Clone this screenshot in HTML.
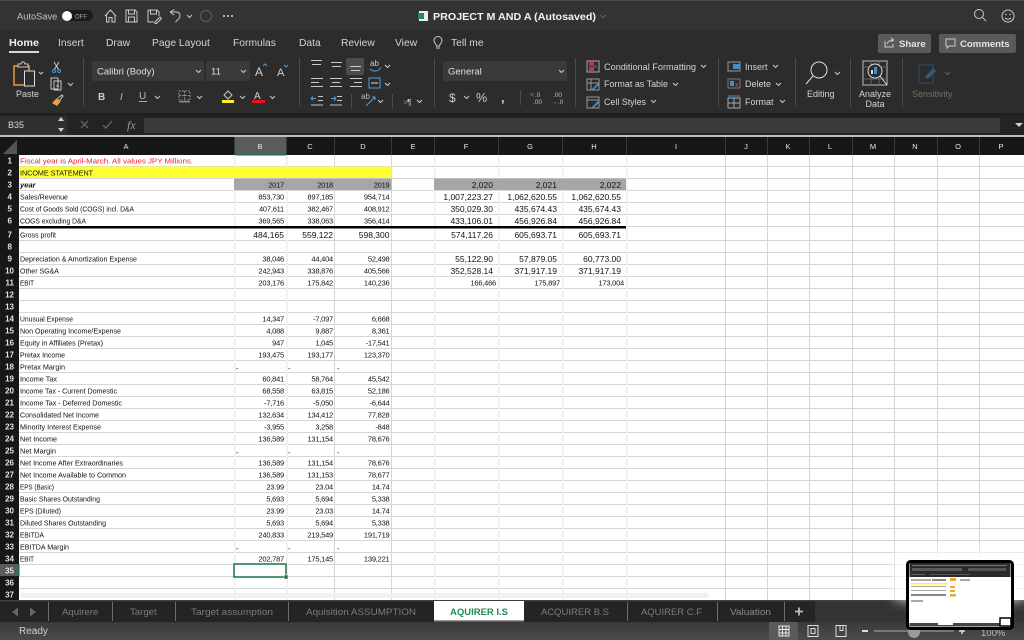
<!DOCTYPE html>
<html><head><meta charset="utf-8"><title>PROJECT M AND A</title>
<style>
html,body{margin:0;padding:0;background:#2d2d2d;width:1024px;height:640px;overflow:hidden}
svg{display:block;font-family:"Liberation Sans",sans-serif;filter:blur(.3px)}
.i{fill:none;stroke:#c9c9c9;stroke-width:1}
.r{font-size:10.3px;fill:#d4d4d4}
.s{font-size:9px;fill:#d4d4d4}
.t{font-size:9.6px;fill:#7c7c7c}
.l text{font-size:7.6px;fill:#111}
.n text{font-size:7.5px;fill:#111;text-anchor:end;letter-spacing:-.22px}
.m text{font-size:8.5px;fill:#111;text-anchor:end}
.h text{font-size:7.5px;fill:#e8e8e8;text-anchor:middle}
.rh text{font-size:8px;font-weight:bold;fill:#e4e4e4;text-anchor:end}
.c{fill:none;stroke:#c9c9c9;stroke-width:1}
</style></head><body>
<svg xmlns="http://www.w3.org/2000/svg" width="1024" height="640" viewBox="0 0 1024 640">
<defs><filter id="b" x="-30%" y="-30%" width="160%" height="160%"><feGaussianBlur stdDeviation="6"/></filter>
<linearGradient id="sb" x1="0" y1="0" x2="0" y2="1"><stop offset="0" stop-color="#3a3a3a"/><stop offset="1" stop-color="#4b4b4b"/></linearGradient></defs>
<!-- chrome -->
<rect width="1024" height="30" fill="#333"/>
<rect width="1024" height="1" fill="#4b4b4b"/>
<rect y="30" width="1024" height="83" fill="#2c2c2c"/>
<rect y="113" width="1024" height="22" fill="#232323"/>
<!-- title bar -->
<text x="17" y="19.500" font-size="9.300" fill="#c4c4c4">AutoSave</text>
<rect x="62" y="10" width="31" height="11" rx="5.500" fill="#1b1b1b"/><circle cx="67" cy="16" r="5" fill="#fff"/>
<text x="75" y="18.500" font-size="6" fill="#aaa">OFF</text>
<path class="i" d="M105 16l5.500-6 5.500 6M106.500 15v7h2.500v-4.500h3V22h3v-7"/>
<path class="i" d="M126 10h9l2 2v10h-11zM128.500 10v4h6v-4M128.500 22v-5h6v5"/>
<path class="i" d="M148 10h9l2 2v4M148 10v12h6M150.500 10v4h6v-4M155 22l5-5 1.500 1.500-5 5h-1.500z"/>
<path class="i" d="M170 12l4.500-2.500M170 12l4 3M170 12h6c3 0 4 2 4 4 0 2-2 3.500-4.500 6"/>
<path class="c" d="M187 15l2.500 2.500L192 15"/>
<circle cx="206" cy="16" r="5.500" fill="none" stroke="#5e5e5e"/>
<circle cx="224" cy="16" r="1" fill="#ddd"/><circle cx="228" cy="16" r="1" fill="#ddd"/><circle cx="232" cy="16" r="1" fill="#ddd"/>
<rect x="419" y="11" width="9" height="10" fill="#eee"/><rect x="418" y="13" width="6" height="6" fill="#2a8a57"/>
<text x="433" y="20" font-size="10.400" font-weight="bold" fill="#f2f2f2" textLength="163" lengthAdjust="spacingAndGlyphs">PROJECT M AND A (Autosaved)</text>
<path d="M600 15l3 2.500 3-2.500" fill="none" stroke="#666"/>
<circle cx="979" cy="14" r="4.500" class="i"/><path class="i" d="M982.500 17.500L986 21"/>
<circle cx="1008" cy="16" r="6" class="i"/><circle cx="1006" cy="14.500" r=".8" fill="#ccc"/><circle cx="1010" cy="14.500" r=".8" fill="#ccc"/><path class="i" d="M1005 18c1.500 1.500 4.500 1.500 6 0"/>
<!-- tabs -->
<text x="9" y="46" font-size="10.300" font-weight="bold" fill="#f0f0f0" textLength="30" lengthAdjust="spacingAndGlyphs">Home</text>
<rect x="9" y="51" width="30" height="2" fill="#d8d8d8"/>
<text class="r" x="58" y="46">Insert</text><text class="r" x="106" y="46">Draw</text><text class="r" x="152" y="46">Page Layout</text><text class="r" x="233" y="46">Formulas</text><text class="r" x="299" y="46">Data</text><text class="r" x="341" y="46">Review</text><text class="r" x="395" y="46">View</text>
<path class="i" d="M436 48h4M436.500 46c0-2-2.500-3-2.500-5.500a4 4 0 0 1 8 0c0 2.500-2.500 3.500-2.500 5.500z"/>
<text class="r" x="451" y="46">Tell me</text>
<rect x="878" y="34" width="53" height="19" rx="2" fill="#5a5a5a"/><text x="899" y="47" font-size="9.600" font-weight="bold" fill="#e4e4e4">Share</text>
<path class="i" d="M885 41v6h8v-3M887 44c1-3 3-4 6-4M891 38l2.500 2-2.500 2"/>
<rect x="939" y="34" width="77" height="19" rx="2" fill="#5a5a5a"/><text x="960" y="47" font-size="9.600" font-weight="bold" fill="#e4e4e4">Comments</text>
<path class="i" d="M946 39h9v7h-6l-2 2v-2h-1z"/>
<!-- separators -->
<g fill="#4a4a4a"><rect x="83" y="58" width="1" height="49"/><rect x="299" y="58" width="1" height="49"/><rect x="434" y="58" width="1" height="49"/><rect x="575" y="58" width="1" height="49"/><rect x="718" y="58" width="1" height="49"/><rect x="795" y="58" width="1" height="49"/><rect x="850" y="58" width="1" height="49"/><rect x="902" y="58" width="1" height="49"/></g>
<!-- paste group -->
<path d="M14 66h15v19H14z" fill="none" stroke="#e39a3b" stroke-width="1.500"/>
<path class="i" d="M18 64h3l1-2h2l1 2h3v3H18z" style="fill:#2c2c2c"/>
<rect x="24.500" y="71" width="10" height="15" fill="#2c2c2c" stroke="#ddd"/>
<path class="c" d="M39 72l2 2 2-2"/>
<text class="s" x="16" y="97">Paste</text>
<path d="M54 62l5 8M59 62l-5 8" stroke="#ccc" fill="none"/><circle cx="54" cy="71" r="1.500" fill="none" stroke="#3f9be0"/><circle cx="59" cy="71" r="1.500" fill="none" stroke="#3f9be0"/>
<path class="i" d="M51 78h7v11h-7zM54 81h7v9h-7zM56 86h3"/><path class="c" d="M68 83l2.500 2.500L73 83"/>
<path d="M52 103l5-5 4 3-4 5z" fill="#e8a33d"/><path class="i" d="M58 98l4-3 1 1-3 4"/>
<!-- font -->
<rect x="92" y="61" width="112" height="20" rx="2" fill="#3a3a3a"/><rect x="206" y="61" width="44" height="20" rx="2" fill="#3a3a3a"/>
<text x="97" y="74.500" font-size="9.500" fill="#e0e0e0">Calibri (Body)</text><text x="211" y="74.500" font-size="9.500" fill="#e0e0e0">11</text>
<path class="c" d="M196 70l2.500 2.500L201 70M241 70l2.500 2.500L246 70"/>
<text x="255" y="76" font-size="12" fill="#d0d0d0">A</text><path d="M263 66l2-2 2 2" fill="none" stroke="#4d9fe0"/>
<text x="277" y="76" font-size="11" fill="#d0d0d0">A</text><path d="M284 65l2 2 2-2" fill="none" stroke="#4d9fe0"/>
<text x="98" y="100" font-size="10" font-weight="bold" fill="#ccc">B</text>
<text x="120" y="100" font-size="10" font-style="italic" fill="#bbb">I</text>
<text x="139" y="99" font-size="10" fill="#bbb">U</text><rect x="139" y="101" width="8" height="1" fill="#aaa"/>
<path class="c" d="M155 96l2.500 2.500L160 96M197 96l2.500 2.500L202 96M240 96l2.500 2.500L245 96M270 96l2.500 2.500L275 96"/>
<path d="M179 91h11v9h-11zM184.500 91v9M179 95.500h11" fill="none" stroke="#888" stroke-dasharray="2 1"/><rect x="179" y="101" width="11" height="1.500" fill="#888"/>
<path class="i" d="M224 95l4-4 4 4-4 4z"/><rect x="222" y="100" width="12" height="3" fill="#ffee2e"/>
<text x="254" y="99" font-size="10" fill="#d0d0d0">A</text><rect x="252" y="100" width="13" height="3" fill="#e8121f"/>
<!-- alignment -->
<rect x="346" y="58" width="18" height="17" rx="2" fill="#4c4c4c"/>
<path class="i" d="M311 60.500h11M312 64.500h9M331 62.500h11M332 66.500h9M350 66.500h11M351 70.500h9M311 78.500h12M311 82.500h8M311 86.500h12M330 78.500h12M332 82.500h8M330 86.500h12M350 78.500h12M354 82.500h8M350 86.500h12"/>
<text x="370" y="66" font-size="8" fill="#ccc">ab</text><path d="M370 69c3 3 9 3 11-2" fill="none" stroke="#4d9fe0"/>
<path class="c" d="M385 65l2.500 2.500L390 65M385 83l2.500 2.500L390 83"/>
<rect x="369" y="78" width="11" height="10" fill="none" stroke="#4d9fe0"/><path d="M371 83h7" stroke="#ddd"/>
<path d="M311 98.500h5m-5 0l2-2m-2 2l2 2" stroke="#4d9fe0" fill="none"/><path class="i" d="M318 96.500h5M318 100.500h5"/><rect x="311" y="104" width="12" height="2" fill="#777"/>
<path d="M331 98.500h5m0 0l-2-2m2 2l-2 2" stroke="#4d9fe0" fill="none"/><path class="i" d="M337 96.500h5M337 100.500h5"/><rect x="330" y="104" width="12" height="2" fill="#777"/>
<rect x="351" y="94" width="1" height="15" fill="#4a4a4a"/>
<path d="M366 106l9-9m-3 0h3v3" stroke="#4d9fe0" fill="none"/><text x="361" y="99" font-size="8" fill="#bbb">ab</text>
<path class="c" d="M378 100l2.500 2.500L383 100M417 100l2.500 2.500L422 100"/>
<rect x="392" y="94" width="1" height="15" fill="#4a4a4a"/>
<text x="403" y="105" font-size="8.500" fill="#4d9fe0">&gt;</text><text x="407" y="105" font-size="8.500" fill="#ccc">¶</text>
<!-- number -->
<rect x="443" y="61" width="124" height="20" rx="2" fill="#3a3a3a"/><text x="448" y="74.500" font-size="9.500" fill="#e0e0e0">General</text>
<path class="c" d="M559 70l2.500 2.500L564 70"/>
<text x="449" y="102" font-size="12" fill="#ccc">$</text><path class="c" d="M464 96l2.500 2.500L469 96"/>
<text x="476" y="102" font-size="12.500" fill="#ccc">%</text><text x="501" y="102" font-size="13" font-weight="bold" fill="#ccc">,</text>
<rect x="520" y="90" width="1" height="15" fill="#4a4a4a"/>
<text x="530" y="97" font-size="7" fill="#4d9fe0">&lt;</text><text x="535" y="97" font-size="6.500" fill="#bbb">.0</text><text x="533" y="104" font-size="6.500" fill="#bbb">.00</text>
<text x="553" y="97" font-size="6.500" fill="#bbb">.00</text><text x="551" y="104" font-size="7" fill="#4d9fe0">→</text><text x="558" y="104" font-size="6.500" fill="#bbb">.0</text>
<!-- styles -->
<rect x="587" y="61" width="12" height="11" fill="none" stroke="#aaa"/><rect x="589" y="62" width="5" height="3" fill="#d13438"/><rect x="589" y="68" width="5" height="3" fill="#d13438"/><rect x="589" y="65" width="8" height="3" fill="#2d6fb5" opacity=".6"/>
<text class="s" x="604" y="70" textLength="92" lengthAdjust="spacingAndGlyphs">Conditional Formatting</text><path class="c" d="M701 65l2.500 2.500L706 65"/>
<path d="M587 79h12v11h-12zM591 79v11M587 83h12" fill="none" stroke="#999"/><path d="M591 90l7-7 1 2-6 5z" fill="#3f8fd0"/>
<text class="s" x="604" y="87" textLength="64" lengthAdjust="spacingAndGlyphs">Format as Table</text><path class="c" d="M673 83l2.500 2.500L678 83"/>
<path d="M587 97h12v11h-12zM587 100h12" fill="none" stroke="#999"/><path d="M591 108l7-7 1 2-6 5z" fill="#3f8fd0"/>
<text class="s" x="604" y="105" textLength="42" lengthAdjust="spacingAndGlyphs">Cell Styles</text><path class="c" d="M651 100l2.500 2.500L656 100"/>
<!-- cells -->
<rect x="728" y="62" width="12" height="9" fill="none" stroke="#999"/><rect x="733" y="64" width="7" height="5" fill="#3f8fd0"/>
<text class="s" x="745" y="70">Insert</text><path class="c" d="M773 65l2.500 2.500L778 65"/>
<rect x="728" y="79" width="12" height="9" fill="none" stroke="#777"/><rect x="730" y="81" width="4" height="5" fill="#3f8fd0"/><text x="735" y="87" font-size="7" fill="#e5484d">x</text>
<text class="s" x="745" y="87">Delete</text><path class="c" d="M776 83l2.500 2.500L781 83"/>
<path d="M728 98h12v10h-12zM734 98v10M728 103h12" fill="none" stroke="#aaa"/><path d="M728 96h12" stroke="#3f8fd0"/>
<text class="s" x="745" y="105">Format</text><path class="c" d="M780 100l2.500 2.500L785 100"/>
<circle cx="819" cy="70" r="8" class="i" style="stroke:#ddd"/><path d="M813 76l-7 8" stroke="#ddd" fill="none"/><path class="c" d="M835 72l2.500 2.500L840 72"/>
<text class="s" x="807" y="97">Editing</text>
<rect x="863" y="61" width="24" height="24" fill="none" stroke="#bbb"/><path d="M863 67h24M863 79h24M871 61v24M879 61v24" stroke="#666" fill="none"/>
<circle cx="875" cy="71" r="7" fill="#2c2c2c" stroke="#ddd"/><rect x="871" y="70" width="2" height="4" fill="#ddd"/><rect x="874" y="67" width="3" height="7" fill="#3f8fd0"/><path d="M880 76l7 9" stroke="#ddd"/>
<text x="875" y="97" font-size="9" fill="#d4d4d4" text-anchor="middle">Analyze</text><text x="875" y="107" font-size="9" fill="#d4d4d4" text-anchor="middle">Data</text>
<path d="M919 65h14v18h-14z" fill="none" stroke="#2b4d6c"/><path d="M925 77l8-9 3 3-8 8z" fill="#34597a"/><path class="c" style="stroke:#666" d="M945 72l2.500 2.500L950 72"/>
<text x="912" y="97" font-size="9" fill="#6f6f6f">Sensitivity</text>
<!-- formula bar -->
<rect y="113" width="67" height="22" fill="#2f2f2f"/>
<rect x="0" y="113" width="1024" height="3" fill="#202020"/>
<text x="8" y="128" font-size="9" fill="#d8d8d8">B35</text>
<path d="M58 121l3-4 3 4zM58 128l3 4 3-4z" fill="#cfcfcf"/>
<path d="M81 121l7 7M88 121l-7 7M103 125l3 3 6-7" fill="none" stroke="#5f5f5f" stroke-width="1.500"/>
<text x="127" y="129" font-size="12" font-style="italic" fill="#9a9a9a" style="font-family:'Liberation Serif',serif">fx</text>
<rect x="144" y="118" width="856" height="15" fill="#3b3b3b"/>
<rect x="1000" y="118" width="24" height="15" fill="#232323"/>
<path d="M1015 123h8l-4 4z" fill="#cfcfcf"/>
<!-- sheet -->
<rect y="135" width="1024" height="466" fill="#fff"/>
<rect y="135" width="1024" height="2" fill="#bdbdbd"/>
<rect y="137" width="1024" height="18" fill="#171717"/>
<rect x="0" y="137" width="19" height="464" fill="#171717"/>
<path d="M3 154L17 140v14z" fill="#555"/>
<rect x="234" y="137" width="52" height="18" fill="#5b5b5b"/><rect x="234" y="154" width="52" height="1.500" fill="#1f7244"/>
<g fill="#3a3a3a"><rect x="234" y="137" width="1" height="18"/><rect x="286" y="137" width="1" height="18"/><rect x="334" y="137" width="1" height="18"/><rect x="391" y="137" width="1" height="18"/><rect x="434" y="137" width="1" height="18"/><rect x="498" y="137" width="1" height="18"/><rect x="562" y="137" width="1" height="18"/><rect x="626" y="137" width="1" height="18"/><rect x="725" y="137" width="1" height="18"/><rect x="767" y="137" width="1" height="18"/><rect x="809" y="137" width="1" height="18"/><rect x="852" y="137" width="1" height="18"/><rect x="894" y="137" width="1" height="18"/><rect x="937" y="137" width="1" height="18"/><rect x="979" y="137" width="1" height="18"/></g>
<g class="h"><text x="126" y="149">A</text><text x="260" y="149">B</text><text x="310" y="149">C</text><text x="363" y="149">D</text><text x="413" y="149">E</text><text x="466" y="149">F</text><text x="530" y="149">G</text><text x="594" y="149">H</text><text x="676" y="149">I</text><text x="746" y="149">J</text><text x="788" y="149">K</text><text x="830" y="149">L</text><text x="873" y="149">M</text><text x="915" y="149">N</text><text x="958" y="149">O</text><text x="1001" y="149">P</text></g>
<!-- grid horizontal -->
<path stroke="#d6d6d6" fill="none" d="M19 166.500H1024M19 178.500H1024M19 190.500H1024M19 202.500H1024M19 214.500H1024M19 226.500H1024M19 240.500H1024M19 252.500H1024M19 264.500H1024M19 276.500H1024M19 288.500H1024M19 300.500H1024M19 312.500H1024M19 324.500H1024M19 336.500H1024M19 348.500H1024M19 360.500H1024M19 372.500H1024M19 384.500H1024M19 396.500H1024M19 408.500H1024M19 420.500H1024M19 432.500H1024M19 444.500H1024M19 456.500H1024M19 468.500H1024M19 480.500H1024M19 492.500H1024M19 504.500H1024M19 516.500H1024M19 528.500H1024M19 540.500H1024M19 552.500H1024M19 564.500H1024M19 576.500H1024M19 588.500H1024M19 600.500H1024"/>
<!-- grid vertical -->
<path stroke="#f1f1f1" stroke-width="2" fill="none" d="M235 155V601M287 155V601M435 155V601M499 155V601M563 155V601M627 155V601"/>
<path stroke="#d6d6d6" fill="none" d="M334.500 155V601M391.500 155V601M725.500 155V601M767.500 155V601M809.500 155V601M852.500 155V601M894.500 155V601M937.500 155V601M979.500 155V601"/>
<!-- fills -->
<rect x="19" y="166.500" width="372.500" height="11.500" fill="#ffff33"/>
<rect x="234" y="178.500" width="157.500" height="11.500" fill="#a6a6a6"/>
<rect x="434" y="178.500" width="192" height="11.500" fill="#a6a6a6"/>
<rect x="19" y="226" width="607" height="2.500" fill="#000"/>
<rect x="20" y="593" width="689" height="5" rx="2.500" fill="#f1f1f1"/>
<!-- row headers -->
<rect x="0" y="564" width="19" height="12" fill="#5b5b5b"/><rect x="18" y="564" width="1.500" height="12" fill="#1f7244"/>
<g class="rh">
<text x="12" y="163.500">1</text><text x="12" y="175.500">2</text><text x="12" y="187.500">3</text><text x="12" y="199.500">4</text><text x="12" y="211.500">5</text><text x="12" y="223.500">6</text><text x="12" y="237.500">7</text><text x="12" y="249.500">8</text><text x="12" y="261.500">9</text><text x="14" y="273.500">10</text><text x="14" y="285.500">11</text><text x="14" y="297.500">12</text><text x="14" y="309.500">13</text><text x="14" y="321.500">14</text><text x="14" y="333.500">15</text><text x="14" y="345.500">16</text><text x="14" y="357.500">17</text><text x="14" y="369.500">18</text><text x="14" y="381.500">19</text><text x="14" y="393.500">20</text><text x="14" y="405.500">21</text><text x="14" y="417.500">22</text><text x="14" y="429.500">23</text><text x="14" y="441.500">24</text><text x="14" y="453.500">25</text><text x="14" y="465.500">26</text><text x="14" y="477.500">27</text><text x="14" y="489.500">28</text><text x="14" y="501.500">29</text><text x="14" y="513.500">30</text><text x="14" y="525.500">31</text><text x="14" y="537.500">32</text><text x="14" y="549.500">33</text><text x="14" y="561.500">34</text><text x="14" y="573.500">35</text><text x="14" y="585.500">36</text><text x="14" y="597.500">37</text>
</g>
<!-- labels -->
<g class="l">
<text x="20" y="163.500" style="fill:#f0222e" textLength="173" lengthAdjust="spacingAndGlyphs">Fiscal year is April-March. All values JPY Millions.</text>
<text x="20" y="175.500" textLength="73" lengthAdjust="spacingAndGlyphs">INCOME STATEMENT</text>
<text x="20" y="187.500" font-weight="bold" font-style="italic">year</text>
<text x="20" y="199.500" textLength="48" lengthAdjust="spacingAndGlyphs">Sales/Revenue</text>
<text x="20" y="211.500" textLength="114" lengthAdjust="spacingAndGlyphs">Cost of Goods Sold (COGS) incl. D&amp;A</text>
<text x="20" y="223.500" textLength="66" lengthAdjust="spacingAndGlyphs">COGS excluding D&amp;A</text>
<text x="20" y="237.500" textLength="36" lengthAdjust="spacingAndGlyphs">Gross profit</text>
<text x="20" y="261.500" textLength="117" lengthAdjust="spacingAndGlyphs">Depreciation &amp; Amortization Expense</text>
<text x="20" y="273.500" textLength="39" lengthAdjust="spacingAndGlyphs">Other SG&amp;A</text>
<text x="20" y="285.500" textLength="14" lengthAdjust="spacingAndGlyphs">EBIT</text>
<text x="20" y="321.500" textLength="53" lengthAdjust="spacingAndGlyphs">Unusual Expense</text>
<text x="20" y="333.500" textLength="101" lengthAdjust="spacingAndGlyphs">Non Operating Income/Expense</text>
<text x="20" y="345.500" textLength="83" lengthAdjust="spacingAndGlyphs">Equity in Affiliates (Pretax)</text>
<text x="20" y="357.500" textLength="45" lengthAdjust="spacingAndGlyphs">Pretax Income</text>
<text x="20" y="369.500" textLength="45" lengthAdjust="spacingAndGlyphs">Pretax Margin</text>
<text x="20" y="381.500" textLength="37" lengthAdjust="spacingAndGlyphs">Income Tax</text>
<text x="20" y="393.500" textLength="97" lengthAdjust="spacingAndGlyphs">Income Tax - Current Domestic</text>
<text x="20" y="405.500" textLength="102" lengthAdjust="spacingAndGlyphs">Income Tax - Deferred Domestic</text>
<text x="20" y="417.500" textLength="79" lengthAdjust="spacingAndGlyphs">Consolidated Net Income</text>
<text x="20" y="429.500" textLength="81" lengthAdjust="spacingAndGlyphs">Minority Interest Expense</text>
<text x="20" y="441.500" textLength="37" lengthAdjust="spacingAndGlyphs">Net Income</text>
<text x="20" y="453.500" textLength="36" lengthAdjust="spacingAndGlyphs">Net Margin</text>
<text x="20" y="465.500" textLength="103" lengthAdjust="spacingAndGlyphs">Net Income After Extraordinaries</text>
<text x="20" y="477.500" textLength="106" lengthAdjust="spacingAndGlyphs">Net Income Available to Common</text>
<text x="20" y="489.500" textLength="34" lengthAdjust="spacingAndGlyphs">EPS (Basic)</text>
<text x="20" y="501.500" textLength="80" lengthAdjust="spacingAndGlyphs">Basic Shares Outstanding</text>
<text x="20" y="513.500" textLength="41" lengthAdjust="spacingAndGlyphs">EPS (Diluted)</text>
<text x="20" y="525.500" textLength="86" lengthAdjust="spacingAndGlyphs">Diluted Shares Outstanding</text>
<text x="20" y="537.500" textLength="24" lengthAdjust="spacingAndGlyphs">EBITDA</text>
<text x="20" y="549.500" textLength="49" lengthAdjust="spacingAndGlyphs">EBITDA Margin</text>
<text x="20" y="561.500" textLength="14" lengthAdjust="spacingAndGlyphs">EBIT</text>
<text x="236" y="371">-</text><text x="288" y="371">-</text><text x="337" y="371">-</text>
<text x="236" y="455">-</text><text x="288" y="455">-</text><text x="337" y="455">-</text>
<text x="236" y="551">-</text><text x="288" y="551">-</text><text x="337" y="551">-</text>
</g>
<!-- col B -->
<g class="n" transform="translate(284,0)"><text y="187.500">2017</text><text y="199.500">853,730</text><text y="211.500">407,611</text><text y="223.500">369,565</text><text y="261.500">38,046</text><text y="273.500">242,943</text><text y="285.500">203,176</text><text y="321.500">14,347</text><text y="333.500">4,088</text><text y="345.500">947</text><text y="357.500">193,475</text><text y="381.500">60,841</text><text y="393.500">68,558</text><text y="405.500">-7,716</text><text y="417.500">132,634</text><text y="429.500">-3,955</text><text y="441.500">136,589</text><text y="465.500">136,589</text><text y="477.500">136,589</text><text y="489.500">23.99</text><text y="501.500">5,693</text><text y="513.500">23.99</text><text y="525.500">5,693</text><text y="537.500">240,833</text><text y="561.500">202,787</text></g>
<g class="n" transform="translate(333,0)"><text y="187.500">2018</text><text y="199.500">897,185</text><text y="211.500">382,467</text><text y="223.500">338,063</text><text y="261.500">44,404</text><text y="273.500">338,876</text><text y="285.500">175,842</text><text y="321.500">-7,097</text><text y="333.500">9,887</text><text y="345.500">1,045</text><text y="357.500">193,177</text><text y="381.500">58,764</text><text y="393.500">63,815</text><text y="405.500">-5,050</text><text y="417.500">134,412</text><text y="429.500">3,258</text><text y="441.500">131,154</text><text y="465.500">131,154</text><text y="477.500">131,153</text><text y="489.500">23.04</text><text y="501.500">5,694</text><text y="513.500">23.03</text><text y="525.500">5,694</text><text y="537.500">219,549</text><text y="561.500">175,145</text></g>
<g class="n" transform="translate(389.500,0)"><text y="187.500">2019</text><text y="199.500">954,714</text><text y="211.500">408,912</text><text y="223.500">356,414</text><text y="261.500">52,498</text><text y="273.500">405,566</text><text y="285.500">140,236</text><text y="321.500">6,668</text><text y="333.500">8,361</text><text y="345.500">-17,541</text><text y="357.500">123,370</text><text y="381.500">45,542</text><text y="393.500">52,186</text><text y="405.500">-6,644</text><text y="417.500">77,828</text><text y="429.500">-848</text><text y="441.500">78,676</text><text y="465.500">78,676</text><text y="477.500">78,677</text><text y="489.500">14.74</text><text y="501.500">5,338</text><text y="513.500">14.74</text><text y="525.500">5,338</text><text y="537.500">191,719</text><text y="561.500">139,221</text></g>
<g class="m"><text x="284" y="238">484,165</text><text x="333" y="238">559,122</text><text x="389.500" y="238">598,300</text></g>
<!-- F G H -->
<g class="m" transform="translate(493,0)"><text y="188">2,020</text><text y="200">1,007,223.27</text><text y="212">350,029.30</text><text y="224">433,106.01</text><text y="238">574,117.26</text><text y="262">55,122.90</text><text y="274">352,528.14</text></g>
<g class="m" transform="translate(557,0)"><text y="188">2,021</text><text y="200">1,062,620.55</text><text y="212">435,674.43</text><text y="224">456,926.84</text><text y="238">605,693.71</text><text y="262">57,879.05</text><text y="274">371,917.19</text></g>
<g class="m" transform="translate(621,0)"><text y="188">2,022</text><text y="200">1,062,620.55</text><text y="212">435,674.43</text><text y="224">456,926.84</text><text y="238">605,693.71</text><text y="262">60,773.00</text><text y="274">371,917.19</text></g>
<g class="n"><text x="496" y="285.500">166,466</text><text x="560" y="285.500">175,897</text><text x="624" y="285.500">173,004</text></g>
<!-- selected cell -->
<rect x="234" y="564" width="52" height="13" fill="#fff" stroke="#1f7244" stroke-width="1.500"/>
<rect x="284" y="575" width="4" height="4" fill="#1f7244" stroke="#fff" stroke-width=".5"/>
<!-- sheet tabs -->
<rect y="601" width="1024" height="21" fill="#333"/>
<rect y="601" width="815" height="21" fill="#242424"/>
<rect y="600" width="1024" height="1.500" fill="#3e3e3e"/>
<path d="M12 612l6-4.500v9zM30 607.500l6 4.500-6 4.500z" fill="#666"/>
<g fill="#6d6d6d"><rect x="48" y="602" width="1" height="19"/><rect x="112" y="602" width="1" height="19"/><rect x="175" y="602" width="1" height="19"/><rect x="288" y="602" width="1" height="19"/><rect x="627" y="602" width="1" height="19"/><rect x="717" y="602" width="1" height="19"/><rect x="784" y="602" width="1" height="19"/></g>
<text class="t" x="62" y="615">Aquirere</text><text class="t" x="130" y="615">Target</text><text class="t" x="191" y="615" textLength="82" lengthAdjust="spacingAndGlyphs">Target assumption</text><text class="t" x="306" y="615" textLength="110" lengthAdjust="spacingAndGlyphs">Aquisition ASSUMPTION</text>
<rect x="434" y="601" width="90" height="20" fill="#fff"/><rect x="434" y="620" width="90" height="1.500" fill="#999"/>
<text x="450" y="615" font-size="9.600" font-weight="bold" fill="#1f8a53" textLength="58" lengthAdjust="spacingAndGlyphs">AQUIRER I.S</text>
<text class="t" x="541" y="615" textLength="68" lengthAdjust="spacingAndGlyphs">ACQUIRER B.S</text><text class="t" x="641" y="615" textLength="61" lengthAdjust="spacingAndGlyphs">AQUIRER C.F</text><text class="t" x="730" y="615" textLength="41" lengthAdjust="spacingAndGlyphs" style="fill:#8a8a8a">Valuation</text>
<path d="M795 611.500h8M799 607.500v8" stroke="#bbb" stroke-width="1.800"/>
<!-- status -->
<rect y="622" width="1024" height="18" fill="url(#sb)"/>
<text x="19" y="634" font-size="10" fill="#cfcfcf">Ready</text>
<rect x="769" y="622" width="29" height="18" fill="#5a5a5a"/>
<path d="M779 626h10v10h-10zM779 629.500h10M779 633h10M782.500 626v10M786 626v10" fill="none" stroke="#e6e6e6"/>
<path d="M808 625.500h10v11h-10zM811 628.500h4v5h-4z" fill="none" stroke="#ddd"/>
<path d="M836 625.500h10v11h-10zM840 625.500v5h3v-5" fill="none" stroke="#ddd"/>
<rect x="862" y="630" width="6" height="2" fill="#ddd"/>
<rect x="874" y="630" width="80" height="2" fill="#777"/><circle cx="914" cy="632" r="6" fill="#9a9a9a"/>
<path d="M959 631h6M962 628v6" stroke="#ddd" stroke-width="1.500"/>
<text x="981" y="636" font-size="9.500" fill="#bbb">100%</text>
<!-- thumbnail glow + preview -->
<rect x="896" y="550" width="128" height="50" fill="#fff" opacity=".85" filter="url(#b)"/>
<rect x="907.500" y="561.500" width="105" height="67" rx="3" fill="#fff" stroke="#000" stroke-width="3"/>
<rect x="909.500" y="563" width="101" height="14" fill="#2c2c2c"/>
<rect x="912" y="565" width="95" height="1" fill="#777"/>
<rect x="912" y="568" width="50" height="3" fill="#5a5a5a"/><rect x="968" y="568" width="38" height="3" fill="#555"/>
<rect x="911" y="574" width="14" height="1" fill="#666"/><rect x="930" y="574" width="40" height="1" fill="#555"/>
<rect x="911" y="579" width="20" height="2" fill="#aaa"/><rect x="911" y="583" width="37" height="1.500" fill="#ffee33"/>
<rect x="932" y="579" width="14" height="2" fill="#888"/>
<rect x="950" y="578" width="6" height="3" fill="#f0a630"/><rect x="960" y="579" width="10" height="2" fill="#aaa"/>
<rect x="950" y="586" width="5" height="2" fill="#f0a630"/><rect x="950" y="590" width="5" height="2" fill="#f0a630"/><rect x="950" y="594" width="6" height="2.500" fill="#f0a630"/>
<rect x="911" y="586" width="35" height="1" fill="#aaa"/><rect x="911" y="590" width="35" height="1" fill="#aaa"/><rect x="911" y="594" width="35" height="2" fill="#888"/><rect x="911" y="600" width="12" height="2" fill="#aaa"/>
<rect x="909.500" y="623" width="101" height="3.500" fill="#444"/><rect x="938" y="623" width="15" height="2" fill="#fff"/>
<rect x="1000" y="618" width="11" height="8" fill="#fff" stroke="#000" stroke-width="1.500"/>
</svg>
</body></html>
